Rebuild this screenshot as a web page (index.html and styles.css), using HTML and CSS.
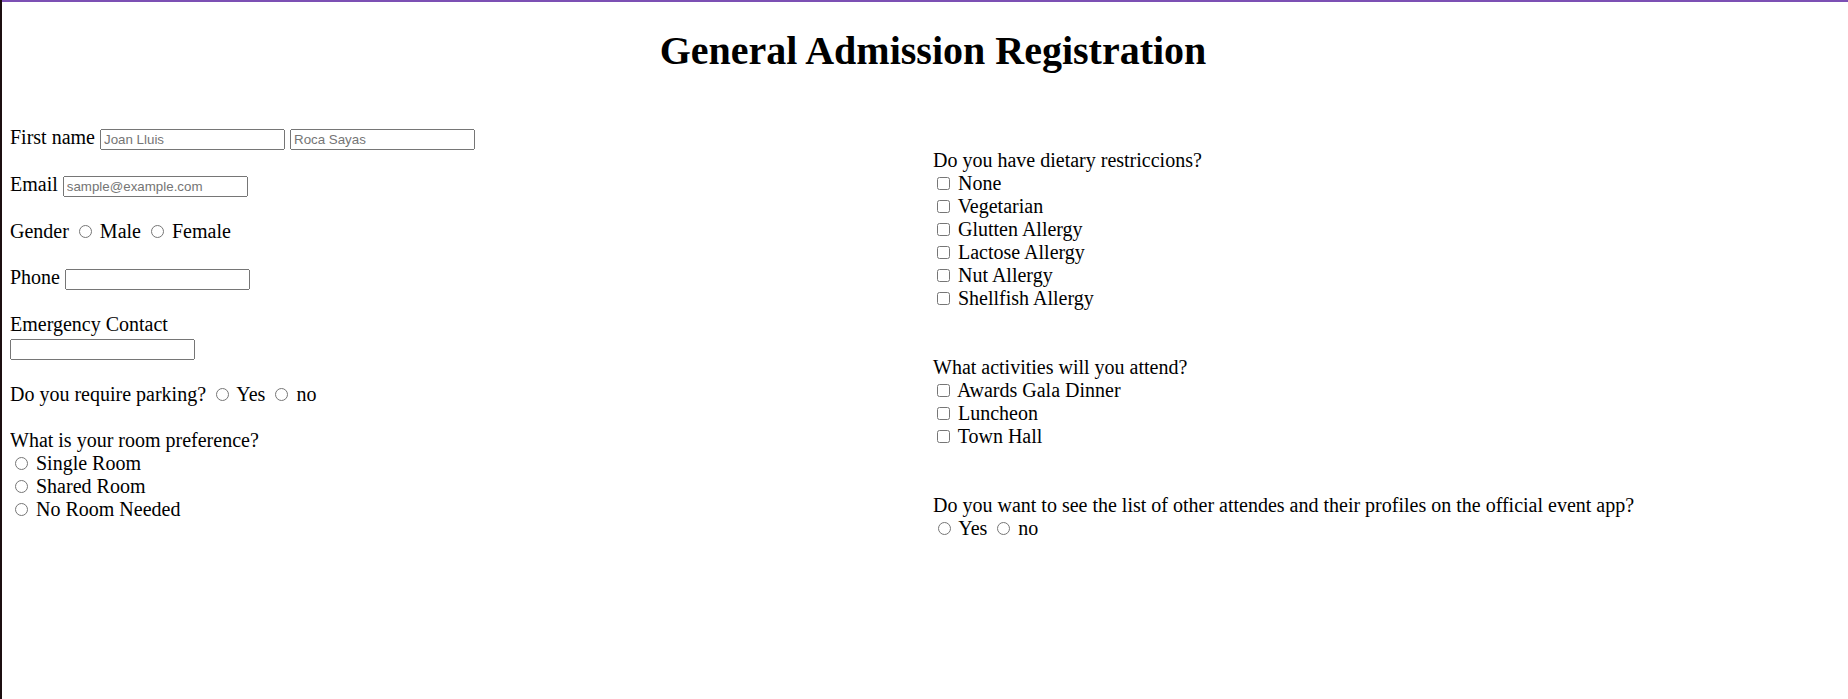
FILE: index.html
```html
<!DOCTYPE html>
<html lang="en">
<head>
<meta charset="utf-8">
<title>General Admission Registration</title>
<link rel="stylesheet" href="styles.css">
</head>
<body>
<div class="topbar"></div>
<h1 class="title">General Admission Registration</h1>
<form class="form">
  <div class="col col-left">
    <div class="row">First name <input class="field" type="text" placeholder="Joan Lluis"> <input class="field" type="text" placeholder="Roca Sayas"></div>
    <div class="row">Email <input class="field" type="email" placeholder="sample@example.com"></div>
    <div class="row">Gender <input type="radio" name="gender"> Male <input type="radio" name="gender"> Female</div>
    <div class="row">Phone <input class="field" type="tel"></div>
    <div class="row">Emergency Contact<br><input class="field" type="text"></div>
    <div class="row">Do you require parking? <input type="radio" name="parking"> Yes <input type="radio" name="parking"> no</div>
    <div class="row">What is your room preference?<br>
      <input type="radio" name="room"> Single Room<br>
      <input type="radio" name="room"> Shared Room<br>
      <input type="radio" name="room"> No Room Needed
    </div>
  </div>
  <div class="col col-right">
    <div class="group">Do you have dietary restriccions?<br>
      <input type="checkbox"> None<br>
      <input type="checkbox"> Vegetarian<br>
      <input type="checkbox"> Glutten Allergy<br>
      <input type="checkbox"> Lactose Allergy<br>
      <input type="checkbox"> Nut Allergy<br>
      <input type="checkbox"> Shellfish Allergy
    </div>
    <div class="group">What activities will you attend?<br>
      <input type="checkbox"> Awards Gala Dinner<br>
      <input type="checkbox"> Luncheon<br>
      <input type="checkbox"> Town Hall
    </div>
    <div class="group">Do you want to see the list of other attendes and their profiles on the official event app?<br>
      <input type="radio" name="app"> Yes <input type="radio" name="app"> no
    </div>
  </div>
</form>
</body>
</html>
```
FILE: styles.css
```css
html {
  border-left: 2px solid #1c0e10;
  background: #ffffff;
  min-height: 100vh;
  box-sizing: border-box;
}
body {
  margin: 0 8px 8px;
  font-family: "Liberation Serif", "Times New Roman", serif;
  font-size: 20px;
  color: #000000;
}
.topbar {
  position: fixed;
  top: 0;
  left: 2px;
  right: 0;
  height: 2px;
  background: #7c50b4;
}
.title {
  font-size: 40px;
  font-weight: bold;
  text-align: center;
  margin: 27px 0 52px;
  padding-left: 16px;
}
.form {
  display: grid;
  grid-template-columns: 923px 1fr;
}
.row {
  margin-bottom: 23px;
}
.col-right {
  margin-top: 23px;
}
.group {
  margin-bottom: 46px;
}
.field {
  font: 13.333px "Liberation Sans", Arial, sans-serif;
  width: 185px;
  box-sizing: border-box;
}
```
